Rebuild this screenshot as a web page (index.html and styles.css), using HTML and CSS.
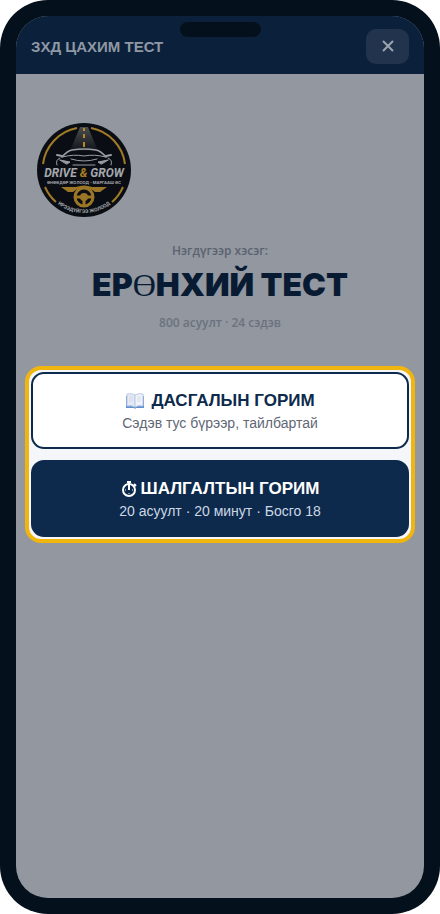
FILE: index.html
```html
<!DOCTYPE html>
<html lang="mn">
<head>
  <meta charset="UTF-8" />
  <meta name="viewport" content="width=device-width, initial-scale=1.0" />
  <title>ЗХД ЦАХИМ ТЕСТ</title>
  <link rel="stylesheet" href="styles.css">
</head>
<body>
  <div class="phone">
    <div class="screen">
      <div class="notch"></div>
      <header class="topbar">
        <span class="brand">ЗХД ЦАХИМ ТЕСТ</span>
        <button class="close" type="button" aria-label="Хаах">
          <svg width="14" height="14" viewBox="0 0 14 14"><path d="M2 2L12 12M12 2L2 12" /></svg>
        </button>
      </header>

      <main>
        <svg class="logo" viewBox="0 0 94 94" role="img" aria-label="Drive &amp; Grow">
          <defs>
            <path id="ring" d="M12 72A43 43 0 0 0 82 72" />
            <linearGradient id="road" x1="0" y1="0" x2="0" y2="1">
              <stop offset="0" stop-color="#4b4d50" />
              <stop offset="1" stop-color="#101419" />
            </linearGradient>
          </defs>
          <circle cx="47" cy="47" r="47" fill="#0a0e14" />
          <!-- gold ring -->
          <g fill="none" stroke="#a07a26" stroke-width="2">
            <path d="M6 41A42 42 0 0 1 40 5" />
            <path d="M54 5A42 42 0 0 1 88 41" />
            <path d="M8 64Q12 73 19 79" />
            <path d="M86 64Q82 73 75 79" />
          </g>
          <!-- road -->
          <path d="M43 4H51L61 28H33Z" fill="url(#road)" />
          <path d="M46 5h2v3h-2zM46 11h2v4h-2zM46 19h2v5h-2z" fill="#b58a2a" />
          <!-- car -->
          <path d="M21 31Q25 28 31 28H63Q69 28 73 31L76 39L70 43H24L18 39Z" fill="#0a0e14" />
          <g fill="none" stroke="#9a9ea4" stroke-linecap="round" stroke-linejoin="round">
            <path d="M25 34Q30 28 35 27Q47 25 59 27Q64 28 69 34" stroke-width="1.5" />
            <path d="M25 34Q37 31 47 33Q57 31 69 34M20 42Q18 37 23 35M74 42Q76 37 71 35" />
            <path d="M23 37L33 39L30 41ZM71 37L61 39L64 41Z" fill="#9a9ea4" />
            <path d="M34 36Q47 40 60 36M36 42H58" />
            <path d="M20 32L25 33M74 32L69 33" stroke-width="2" />
          </g>
          <text class="logo-name" x="47" y="54" text-anchor="middle">DRIVE <tspan fill="#a87d25">&amp;</tspan> GROW</text>
          <text class="logo-line" x="47" y="61" text-anchor="middle">ӨНӨӨДӨР ЖОЛООД - МАРГААШ ӨС</text>
          <!-- steering wheel -->
          <path d="M24 64H39Q47 61 55 64H70L63 69H58Q47 60 36 69H31Z" fill="#9a7626" />
          <g fill="none" stroke="#9a7626">
            <circle cx="47" cy="74" r="9" stroke-width="3" />
            <path d="M38 74H56M47 74V83" stroke-width="3" />
          </g>
          <circle cx="47" cy="74" r="4" fill="#9a7626" />
          <text class="logo-ring"><textPath href="#ring" startOffset="50%" text-anchor="middle">ИРЭЭДҮЙГЭЭ ЖОЛООД</textPath></text>
        </svg>

        <div class="intro">
          <p class="part">Нэгдүгээр хэсэг:</p>
          <h1>ЕР<span class="serif">Ө</span>НХИЙ ТЕСТ</h1>
          <p class="count">800 асуулт · 24 сэдэв</p>
        </div>

        <div class="modes">
          <button class="mode" type="button">
            <span class="mode-title">
              <svg class="book" width="20" height="16" viewBox="0 0 20 16">
                <path d="M1 3H19V15H11L10 16L9 15H1Z" fill="#5f92cf" />
                <path d="M2 1Q7 0 10 2V14Q7 12 2 13Z" fill="#e6eaf5" stroke="#b9c9e4" />
                <path d="M18 1Q13 0 10 2V14Q13 12 18 13Z" fill="#f1f2fa" stroke="#b9c9e4" />
                <path d="M4 4H8M4 6H8M4 8H8M12 4H16M12 6H16M12 8H16" stroke="#c9cede" stroke-width=".6" />
              </svg>
              ДАСГАЛЫН ГОРИМ
            </span>
            <span class="mode-note">Сэдэв тус бүрээр, тайлбартай</span>
          </button>
          <button class="mode dark" type="button">
            <span class="mode-title">
              <svg class="timer" width="16" height="16" viewBox="0 0 16 16" fill="none" stroke="#fff">
                <circle cx="8" cy="9" r="6" stroke-width="2" />
                <path d="M6 1H10M8 1V9M13 3L15 5" stroke-width="2" />
                <path d="M4 9H5M11 9H12M8 12V13" />
              </svg>
              ШАЛГАЛТЫН ГОРИМ
            </span>
            <span class="mode-note">20 асуулт · 20 минут · Босго 18</span>
          </button>
        </div>
      </main>
    </div>
  </div>
</body>
</html>
```

FILE: styles.css
```css
* {
  box-sizing: border-box;
}
body {
  margin: 0;
  background: #fff;
  font-family: "Liberation Sans", Arial, sans-serif;
}
.phone {
  display: flex;
  min-height: 100vh;
  padding: 16px;
  border-radius: 48px;
  background: #05101d;
}
.screen {
  position: relative;
  flex: 1;
  min-width: 0;
  border-radius: 32px;
  overflow: hidden;
  background: #9297a0;
}
.notch {
  position: absolute;
  top: 6px;
  left: 50%;
  width: 81px;
  height: 15px;
  margin-left: -40px;
  border-radius: 8px;
  background: #05101d;
}
.topbar {
  display: flex;
  align-items: center;
  justify-content: space-between;
  height: 58px;
  padding: 2px 15px 0;
  background: #0b213b;
}
.brand {
  color: #8f98a4;
  font-size: 15px;
  font-weight: bold;
}
.close {
  display: flex;
  align-items: center;
  justify-content: center;
  width: 43px;
  height: 35px;
  padding: 0;
  border: none;
  border-radius: 10px;
  background: #22344d;
  cursor: pointer;
}
.close path {
  fill: none;
  stroke: #9ca4b0;
  stroke-width: 2;
}
main {
  padding: 49px 9px 20px;
}
.logo {
  display: block;
  width: 94px;
  height: 94px;
  margin-left: 12px;
}
.logo text {
  fill: #a5a8ad;
  font-weight: bold;
}
.logo .logo-name {
  font-family: Roboto, sans-serif;
  font-size: 12px;
  font-style: italic;
}
.logo .logo-line {
  font-family: Inter, sans-serif;
  font-size: 4px;
}
.logo .logo-ring {
  font-family: Roboto, sans-serif;
  font-size: 5px;
}
.intro {
  text-align: center;
}
.intro p {
  margin: 0;
  font-family: "Open Sans", "Noto Sans", sans-serif;
  font-size: 12px;
  font-weight: 600;
  line-height: 16px;
}
.intro .part {
  margin-top: 26px;
  color: #5c636f;
}
.intro .count {
  color: #6c727d;
}
h1 {
  margin: 6px 0 10px;
  color: #081b33;
  font-family: Inter, sans-serif;
  font-size: 32px;
  font-weight: 900;
  line-height: 40px;
}
.serif {
  font-family: "Liberation Serif", serif;
  font-weight: normal;
}
.modes {
  display: grid;
  gap: 11px;
  margin-top: 35px;
  padding: 2px;
  border: 4px solid #f0b60d;
  border-radius: 16px;
  background: #f4f6f9;
}
.mode {
  display: flex;
  flex-direction: column;
  align-items: center;
  justify-content: center;
  min-height: 77px;
  padding: 10px 8px 8px;
  border: 2px solid #0d2a4c;
  border-radius: 13px;
  background: #fff;
  color: #0d2a4c;
  font-family: inherit;
  cursor: pointer;
}
.mode-title {
  display: flex;
  align-items: center;
  gap: 6px;
  font-size: 17px;
  font-weight: bold;
  line-height: 22px;
}
.mode-note {
  color: #5f6776;
  font-size: 14px;
  line-height: 22px;
}
.mode.dark {
  background: #0d2a4c;
  color: #fff;
}
.dark .mode-title {
  gap: 4px;
}
.dark .mode-note {
  color: #ccd7e6;
}
```
